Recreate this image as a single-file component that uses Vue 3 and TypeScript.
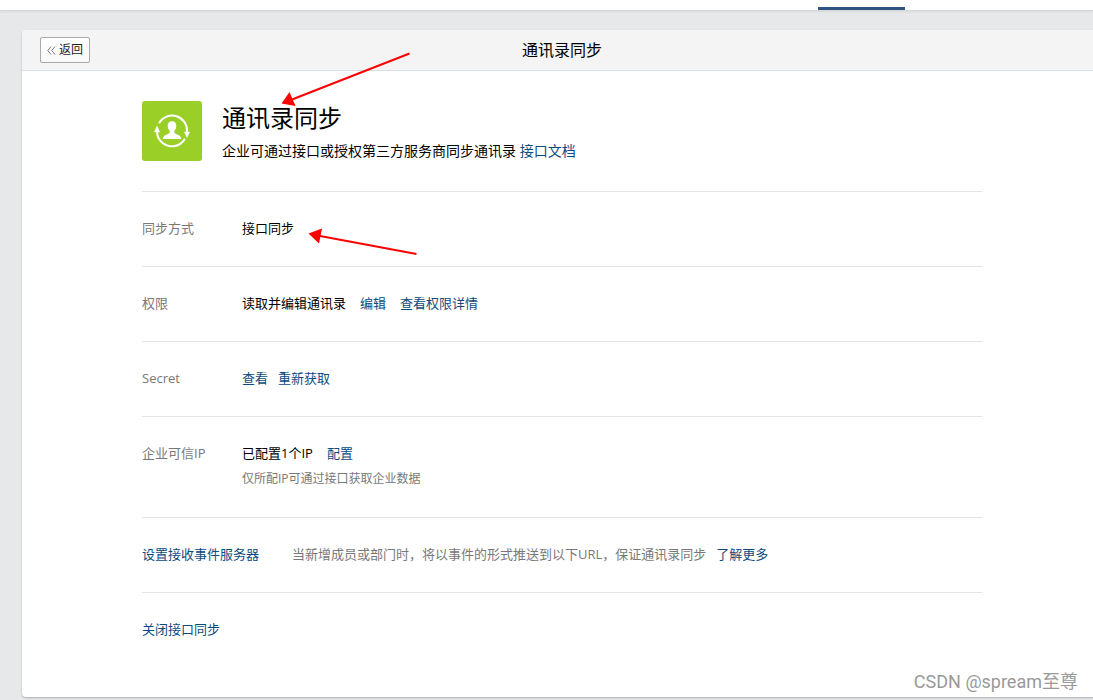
<script setup lang="ts">
interface Row {
  label: string
  value?: string
  links: string[]
  hint?: string
}

const rows: Row[] = [
  { label: '同步方式', value: '接口同步', links: [] },
  { label: '权限', value: '读取并编辑通讯录', links: ['编辑', '查看权限详情'] },
  { label: 'Secret', links: ['查看', '重新获取'] },
  { label: '企业可信IP', value: '已配置1个IP', links: ['配置'], hint: '仅所配IP可通过接口获取企业数据' },
]
</script>

<template>
  <div class="page">
    <nav class="topbar"><span class="tab-marker"></span></nav>
    <main class="card">
      <header class="card-head">
        <button type="button" class="back">
          <svg width="9" height="9" viewBox="0 0 9 9" aria-hidden="true">
            <path d="M4 .5 .8 4.5 4 8.5M8 .5 4.8 4.5 8 8.5" fill="none" stroke="#777" />
          </svg>
          返回
        </button>
        <h1>通讯录同步</h1>
      </header>
      <div class="content">
        <section class="intro">
          <svg class="logo" viewBox="0 0 60 60" aria-hidden="true">
            <rect width="60" height="60" rx="3" fill="#9ACF27" />
            <g fill="none" stroke="#fff" stroke-width="2">
              <path d="M17 22.2A15 15 0 0 1 45 31" />
              <path d="M43 37.8A15 15 0 0 1 15 30" />
            </g>
            <path d="M15 24.5 18 31.2H12ZM45 37 42 30.8H48Z" fill="#fff" />
            <path d="M30 20.2c2.9 0 4.3 1.8 4.3 4.5 0 2.3-.8 3.8-1.9 5v1.6c0 1.1 1 1.5 2.7 2.1 2.8 1 4.1 2 4.1 4.6H20.800c0-2.600 1.300-3.600 4.100-4.600 1.700-.6 2.700-1 2.700-2.100v-1.600c-1.100-1.200-1.900-2.700-1.900-5 0-2.700 1.400-4.500 4.300-4.500Z" fill="#fff" />
          </svg>
          <div>
            <h2>通讯录同步</h2>
            <p>企业可通过接口或授权第三方服务商同步通讯录 <a href="#">接口文档</a></p>
          </div>
        </section>
        <section v-for="row in rows" :key="row.label" class="row">
          <span class="label">{{ row.label }}</span>
          <div>
            <div class="values" :class="{ wide: row.value }">
              <span v-if="row.value">{{ row.value }}</span>
              <a v-for="link in row.links" :key="link" href="#">{{ link }}</a>
            </div>
            <p v-if="row.hint" class="hint">{{ row.hint }}</p>
          </div>
        </section>
        <section class="row">
          <a href="#" class="event-link">设置接收事件服务器</a>
          <div class="values">
            <span class="muted">当新增成员或部门时，将以事件的形式推送到以下URL，保证通讯录同步</span>
            <a href="#">了解更多</a>
          </div>
        </section>
        <section class="row"><a href="#">关闭接口同步</a></section>
      </div>
    </main>
    <svg class="arrows" width="440" height="270" viewBox="0 0 440 270" aria-hidden="true">
      <path d="M409.500 53.500 292 99.500M416.500 254 320 236" stroke="#f00" stroke-width="2" />
      <path d="M281.500 103.500 289.500 92 295.500 106ZM308.500 233.500 322 228.500 319 243.500Z" fill="#f00" />
    </svg>
    <div class="watermark">CSDN @spream至尊</div>
  </div>
</template>

<style>
body {
  margin: 0;
  background: #e7e8ea;
}
</style>

<style scoped>
.page {
  position: relative;
  min-height: 100vh;
  overflow: hidden;
  color: #000;
  font: 13px/18px "Open Sans", "Noto Sans CJK SC", sans-serif;
}
.topbar {
  display: flex;
  justify-content: flex-end;
  align-items: flex-end;
  height: 10px;
  padding-right: 188px;
  background: #fff;
  border-bottom: 1px solid #d6d8d9;
  box-shadow: 0 1px 2px rgba(0, 0, 0, 0.06);
}
.tab-marker {
  width: 87px;
  height: 3px;
  background: #2c5584;
}
.card {
  margin: 19px -9px 0 22px;
  padding-bottom: 30px;
  background: #fff;
  border-radius: 4px;
  box-shadow: 0 1px 2px rgba(0, 0, 0, 0.25);
}
.card-head {
  display: grid;
  grid-template-columns: 1fr auto 1fr;
  align-items: center;
  height: 40px;
  padding: 0 18px;
  background: #f4f4f4;
  border-bottom: 1px solid #d9e0e5;
  border-radius: 4px 4px 0 0;
}
.back {
  display: flex;
  align-items: center;
  justify-content: center;
  justify-self: start;
  gap: 3px;
  width: 50px;
  height: 26px;
  padding: 0;
  background: linear-gradient(#fff, #f9f9f9);
  border: 1px solid #a9a9a9;
  border-radius: 2px;
  color: #222;
  font: inherit;
  font-size: 12px;
}
h1,
h2,
p {
  margin: 0;
  font-weight: 400;
}
h1 {
  font-size: 16px;
  line-height: 24px;
}
.content {
  margin: 0 120px;
}
.intro {
  display: flex;
  gap: 20px;
  padding: 30px 0;
}
.logo {
  width: 60px;
  height: 60px;
}
h2 {
  font-size: 24px;
  line-height: 34px;
}
.intro p {
  margin-top: 6px;
  font-size: 14px;
  line-height: 20px;
}
a {
  color: #0d4a80;
  text-decoration: none;
}
.row {
  display: flex;
  padding: 27px 0 29px;
  border-top: 1px solid #e4e4e4;
}
.label {
  width: 100px;
  color: #787878;
}
.values {
  display: flex;
  gap: 10px;
}
.values.wide {
  gap: 14px;
}
.hint {
  margin-top: 8px;
  color: #787878;
  font-size: 12px;
}
.event-link {
  width: 150px;
}
.muted {
  color: #787878;
}
.arrows {
  position: absolute;
  top: 0;
  left: 0;
  pointer-events: none;
}
.watermark {
  position: absolute;
  right: 15px;
  bottom: 6px;
  color: #999;
  font: 18px/24px Roboto, "Noto Sans CJK SC", sans-serif;
}
</style>
